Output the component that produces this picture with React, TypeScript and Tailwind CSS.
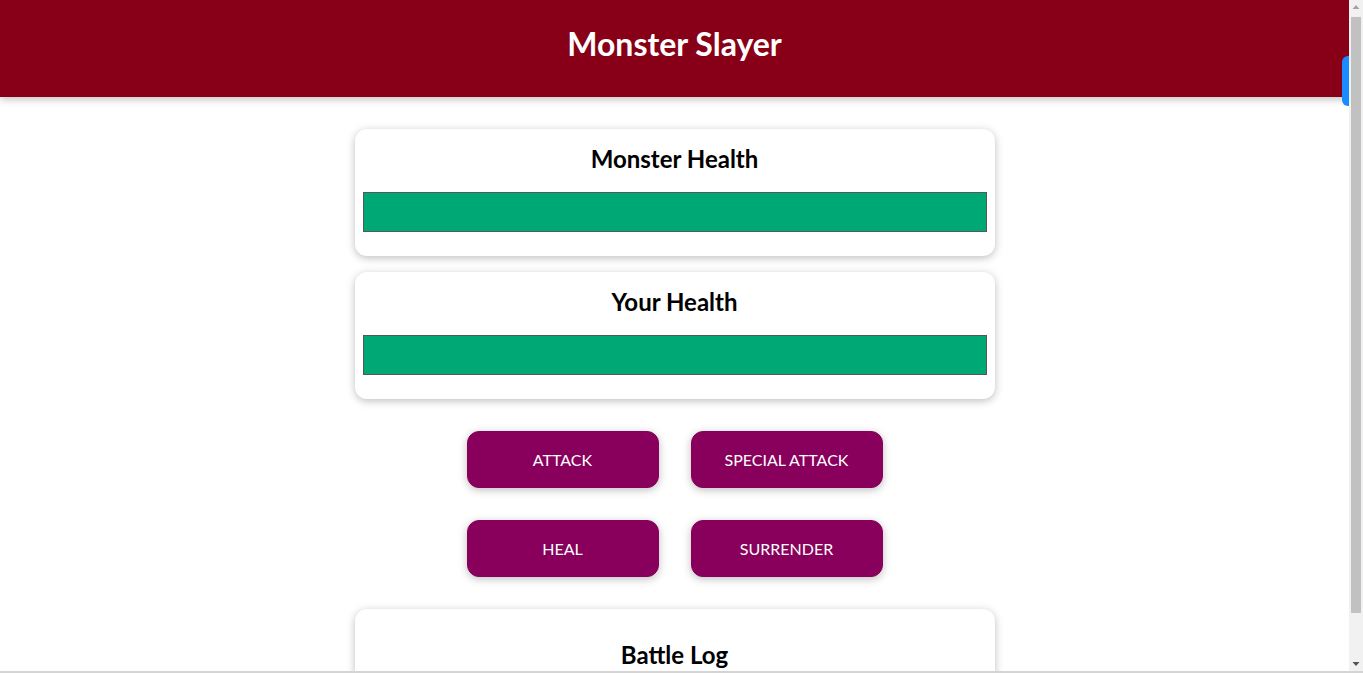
import React from 'react'

const font = { fontFamily: 'Lato, "Noto Sans", sans-serif' }

function HealthCard({ title, value }: { title: string; value: number }) {
  return (
    <section className="mx-auto mb-4 w-[90%] max-w-[640px] rounded-xl bg-white p-2 text-center shadow-[0_2px_8px_rgba(0,0,0,0.26)]">
      <h2 className="h-[39px] pt-[2px] text-[24px] font-bold leading-[39px] text-black">{title}</h2>
      <div className="my-4 h-10 w-full border border-[#575757] bg-[#fde5e5]">
        <div className="h-full bg-[#00a876]" style={{ width: `${value}%` }} />
      </div>
    </section>
  )
}

const actions = ['ATTACK', 'SPECIAL ATTACK', 'HEAL', 'SURRENDER']

function Scrollbar() {
  return (
    <div className="flex w-[14px] shrink-0 flex-col items-center bg-[#f1f1f1]">
      <svg width="14" height="15" viewBox="0 0 14 15" className="shrink-0">
        <path d="M3.5 9 L7 5 L10.5 9 Z" fill="#a3a3a3" />
      </svg>
      <div className="mt-[2px] h-[596px] w-[10px] bg-[#c1c1c1]" />
      <div className="flex-1" />
      <svg width="14" height="15" viewBox="0 0 14 15" className="shrink-0">
        <path d="M3.5 6 L7 10 L10.5 6 Z" fill="#505050" />
      </svg>
    </div>
  )
}

export default function App() {
  return (
    <div className="flex h-screen flex-col overflow-hidden bg-white" style={font}>
      <div className="flex min-h-0 flex-1">
        <main className="relative min-w-0 flex-1 overflow-hidden">
          <header className="mb-8 flex h-[97px] items-center justify-center bg-[#880017] pb-[9px] text-white shadow-[0_2px_8px_rgba(0,0,0,0.26)]">
            <h1 className="text-[32px] font-bold">Monster Slayer</h1>
          </header>

          <HealthCard title="Monster Health" value={100} />
          <HealthCard title="Your Health" value={100} />

          <section className="mx-auto grid w-[90%] max-w-[640px] grid-cols-[192px_192px] justify-center gap-8 pt-4 pb-8">
            {actions.map((a) => (
              <button
                key={a}
                className="h-[57px] w-48 rounded-xl border border-[#88005b] bg-[#88005b] text-[16px] text-white shadow-[0_2px_8px_rgba(0,0,0,0.26)]"
              >
                {a}
              </button>
            ))}
          </section>

          <section className="mx-auto w-[90%] max-w-[640px] rounded-xl bg-white px-2 pt-[26px] pb-8 text-center shadow-[0_2px_8px_rgba(0,0,0,0.26)]">
            <h2 className="h-[39px] text-[24px] font-bold leading-[39px] text-black">Battle Log</h2>
            <ul className="min-h-[120px]" />
          </section>

          <div className="absolute right-0 top-[56px] h-[50px] w-[7px] rounded-l-md bg-[#1a8cff]" />
        </main>
        <Scrollbar />
      </div>
      <div className="h-[2px] shrink-0 bg-[#d4d4d4]" />
    </div>
  )
}
